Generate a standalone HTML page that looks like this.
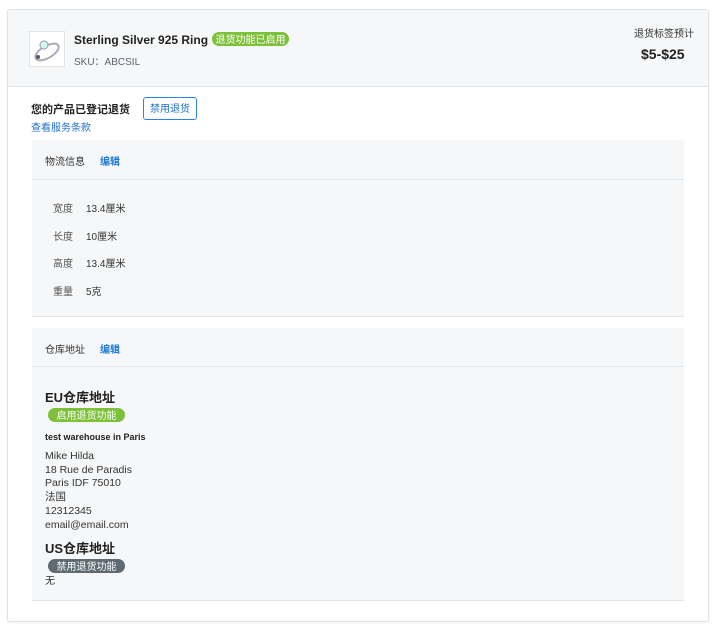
<!DOCTYPE html>
<html><head><meta charset="utf-8"><style>
*{margin:0;padding:0;box-sizing:border-box}
body{width:714px;height:627px;background:#fff;font-family:"Liberation Sans","Noto Sans CJK SC",sans-serif;color:#212b36;position:relative;overflow:hidden}
.a{position:absolute;white-space:nowrap;line-height:1}
.card{position:absolute;left:7px;top:9px;width:702px;height:613px;border:1px solid #dfe3e8;border-radius:3px;background:#fff;box-shadow:0 1px 2px rgba(0,0,0,.06)}
.hdr{position:absolute;left:8px;top:10px;width:700px;height:77px;background:#f6f7f8;border-bottom:1px solid #e3e6e9}
.panel{position:absolute;left:32px;width:652px;background:#f6f7f8;border-bottom:1px solid #e3e6e9}
.ph{position:absolute;left:0;top:0;width:100%;border-bottom:1px solid #e3e6e9}
.badge{position:absolute;height:14px;border-radius:7px;color:#fff;font-size:10px;display:flex;align-items:center;justify-content:center;line-height:1;padding-top:3px}
.s{font-size:10px;color:#333}
</style></head><body>
<div class="card"></div>
<div class="hdr"></div>
<div class="a" style="left:29px;top:31px;width:36px;height:36px;border:1px solid #e3e3e3;background:#fff">
<svg width="34" height="34" viewBox="0 0 34 34"><ellipse cx="17" cy="20" rx="13" ry="6" fill="none" stroke="#aab" stroke-width="2" transform="rotate(-30 17 20)"/><circle cx="14" cy="13" r="4" fill="#cfe" stroke="#99a"/><circle cx="8" cy="25" r="2" fill="#556"/></svg></div>
<div class="a" style="left:74px;top:34px;font-size:12px;font-weight:bold;color:#222">Sterling Silver 925 Ring</div>
<div class="badge" style="left:212px;top:32px;width:77px;background:#7dc13a">退货功能已启用</div>
<div class="a" style="left:74px;top:58px;font-size:10px;color:#5c6670">SKU：ABCSIL</div>
<div class="a" style="left:634px;top:30px;font-size:10px;color:#333">退货标签预计</div>
<div class="a" style="left:641px;top:47px;font-size:14px;font-weight:bold;color:#222">$5-$25</div>
<div class="a" style="left:31px;top:105px;font-size:11px;font-weight:bold;color:#222">您的产品已登记退货</div>
<div class="a" style="left:143px;top:97px;width:54px;height:23px;border:1px solid #2f80ed;border-radius:3px;color:#1f6fd0;font-size:10px;display:flex;align-items:center;justify-content:center;padding-top:3px">禁用退货</div>
<div class="a" style="left:31px;top:124px;font-size:10px;color:#1f6fd0">查看服务条款</div>

<div class="panel" style="top:140px;height:177px"><div class="ph" style="height:40px"></div></div>
<div class="a s" style="left:45px;top:158px">物流信息</div>
<div class="a" style="left:100px;top:158px;font-size:10px;color:#1f7ad8;font-weight:bold">编辑</div>
<div class="a s" style="left:53px;top:205px;color:#555">宽度</div><div class="a s" style="left:86px;top:205px">13.4厘米</div>
<div class="a s" style="left:53px;top:233px;color:#555">长度</div><div class="a s" style="left:86px;top:233px">10厘米</div>
<div class="a s" style="left:53px;top:260px;color:#555">高度</div><div class="a s" style="left:86px;top:260px">13.4厘米</div>
<div class="a s" style="left:53px;top:288px;color:#555">重量</div><div class="a s" style="left:86px;top:288px">5克</div>

<div class="panel" style="top:328px;height:273px"><div class="ph" style="height:39px"></div></div>
<div class="a s" style="left:45px;top:346px">仓库地址</div>
<div class="a" style="left:100px;top:346px;font-size:10px;color:#1f7ad8;font-weight:bold">编辑</div>
<div class="a" style="left:45px;top:391px;font-size:13px;font-weight:bold;color:#222">EU仓库地址</div>
<div class="badge" style="left:48px;top:408px;width:77px;background:#7dc13a">启用退货功能</div>
<div class="a" style="left:45px;top:433px;font-size:9px;font-weight:bold;color:#222">test warehouse in Paris</div>
<div class="a" style="left:45px;top:450px;font-size:10.5px;line-height:13.7px;color:#333">Mike Hilda<br>18 Rue de Paradis<br>Paris IDF 75010<br>法国<br>12312345<br>email@email.com</div>
<div class="a" style="left:45px;top:542px;font-size:13px;font-weight:bold;color:#222">US仓库地址</div>
<div class="badge" style="left:48px;top:559px;width:77px;background:#5f6b73">禁用退货功能</div>
<div class="a" style="left:45px;top:577px;font-size:10px;color:#333">无</div>
</body></html>
